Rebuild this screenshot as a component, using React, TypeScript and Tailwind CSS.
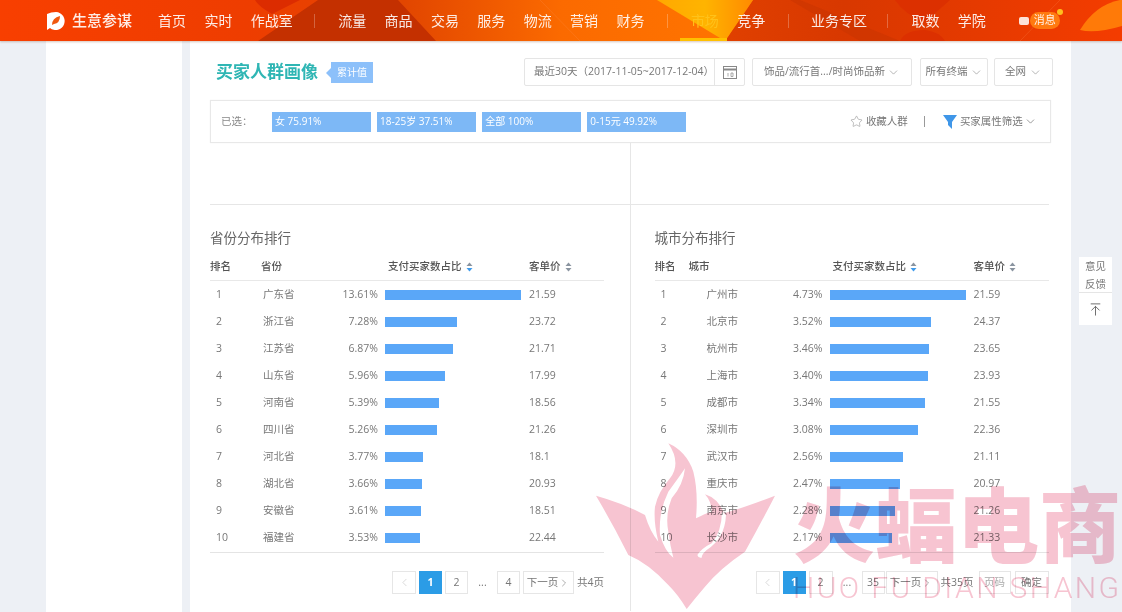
import { ArrowUpToLine, ChevronDown, ChevronLeft, ChevronRight, Star } from "lucide-react";

type Row = { name: string; pct: string; w: number; price: string };

const provinces: Row[] = [
  { name: "广东省", pct: "13.61%", w: 136, price: "21.59" },
  { name: "浙江省", pct: "7.28%", w: 72, price: "23.72" },
  { name: "江苏省", pct: "6.87%", w: 68, price: "21.71" },
  { name: "山东省", pct: "5.96%", w: 60, price: "17.99" },
  { name: "河南省", pct: "5.39%", w: 54, price: "18.56" },
  { name: "四川省", pct: "5.26%", w: 52, price: "21.26" },
  { name: "河北省", pct: "3.77%", w: 38, price: "18.1" },
  { name: "湖北省", pct: "3.66%", w: 37, price: "20.93" },
  { name: "安徽省", pct: "3.61%", w: 36, price: "18.51" },
  { name: "福建省", pct: "3.53%", w: 35, price: "22.44" },
];

const cities: Row[] = [
  { name: "广州市", pct: "4.73%", w: 136, price: "21.59" },
  { name: "北京市", pct: "3.52%", w: 101, price: "24.37" },
  { name: "杭州市", pct: "3.46%", w: 99, price: "23.65" },
  { name: "上海市", pct: "3.40%", w: 98, price: "23.93" },
  { name: "成都市", pct: "3.34%", w: 95, price: "21.55" },
  { name: "深圳市", pct: "3.08%", w: 88, price: "22.36" },
  { name: "武汉市", pct: "2.56%", w: 73, price: "21.11" },
  { name: "重庆市", pct: "2.47%", w: 70, price: "20.97" },
  { name: "南京市", pct: "2.28%", w: 65, price: "21.26" },
  { name: "长沙市", pct: "2.17%", w: 62, price: "21.33" },
];

const chips = ["女 75.91%", "18-25岁 37.51%", "全部 100%", "0-15元 49.92%"];

function Sort({ active }: { active?: boolean }) {
  return (
    <svg width="7" height="10" viewBox="0 0 7 10" className="ml-[4px] inline-block">
      <path d="M3.5 0.5L6.5 4H0.5Z" fill="#8a94a0" />
      <path d="M3.5 9.5L0.5 6H6.5Z" fill={active ? "#3f9bec" : "#8a94a0"} />
    </svg>
  );
}

function NavSep({ className }: { className: string }) {
  return <span className={`h-[14px] w-px bg-white/25 ${className}`} />;
}

function Table({ rows, first, second }: { rows: Row[]; first: string; second: boolean }) {
  return (
    <div className="w-[394px] text-[10.5px] text-[#777]">
      <h3 className="h-[18px] text-[13.5px] leading-[18px] text-[#666]">{first === "省份" ? "省份分布排行" : "城市分布排行"}</h3>
      <div
        className={
          second
            ? "mt-[7px] grid h-[27px] grid-cols-[34px_144px_141px_1fr] items-center border-b border-[#e8e8e8] font-medium text-[#555]"
            : "mt-[7px] grid h-[27px] grid-cols-[51px_127px_141px_1fr] items-center border-b border-[#e8e8e8] font-medium text-[#555]"
        }
      >
        <span>排名</span>
        <span>{first}</span>
        <span className="flex items-center">
          支付买家数占比
          <Sort active />
        </span>
        <span className="flex items-center">
          客单价
          <Sort />
        </span>
      </div>
      <div className="border-b border-[#e4e4e4] pb-px">
        {rows.map((r, i) => (
          <div
            key={r.name}
            className={
              second
                ? "grid h-[27px] grid-cols-[52px_61px_55px_151px_1fr] items-center"
                : "grid h-[27px] grid-cols-[53px_60px_55px_151px_1fr] items-center"
            }
          >
            <span className="pl-[6px]">{i + 1}</span>
            <span>{r.name}</span>
            <span className="text-right">{r.pct}</span>
            <span className="pl-[7px]">
              <span className="block h-[10px] bg-[#5aa7f8]" style={{ width: r.w }} />
            </span>
            <span>{r.price}</span>
          </div>
        ))}
      </div>
    </div>
  );
}

const pageBtn = "flex h-[23px] items-center justify-center border border-[#e6e6e6] bg-white text-[10.5px] text-[#777]";

export default function App() {
  return (
    <div className="h-[612px] w-[1122px] overflow-hidden bg-white">
      <div
        className="relative flex h-[612px] w-[1122px] flex-col overflow-hidden bg-[#edf0f5] blur-[0.7px]"
        style={{ fontFamily: '"Open Sans", "Noto Sans CJK SC", sans-serif' }}
      >
        {/* top bar */}
        <header className="relative flex h-[41px] shrink-0 items-center text-[14px] text-white/90 shadow-[0_1px_2px_rgba(120,60,30,0.3)]">
          <svg className="absolute inset-0" width="1122" height="41" viewBox="0 0 1122 41">
            <defs>
              <linearGradient id="hd" x1="0" x2="1" y1="0" y2="0">
                <stop offset="0" stopColor="#f83f00" />
                <stop offset="0.22" stopColor="#ee3d00" />
                <stop offset="0.36" stopColor="#e24600" />
                <stop offset="0.5" stopColor="#fb6a00" />
                <stop offset="0.65" stopColor="#ff7400" />
                <stop offset="1" stopColor="#ff7400" />
              </linearGradient>
              <linearGradient id="yl" x1="0" x2="1" y1="0" y2="0">
                <stop offset="0" stopColor="#ffa800" />
                <stop offset="0.5" stopColor="#ffb400" />
                <stop offset="1" stopColor="#ff8a00" />
              </linearGradient>
              <linearGradient id="rt" x1="0" x2="1" y1="0" y2="0">
                <stop offset="0" stopColor="#e04000" />
                <stop offset="0.3" stopColor="#d83800" />
                <stop offset="1" stopColor="#f43c00" />
              </linearGradient>
            </defs>
            <rect width="1122" height="41" fill="url(#hd)" />
            <path d="M258 41L318 0H398L436 41Z" fill="#c43000" />
            <path d="M255 0H300L272 14Q258 6 255 0Z" fill="#dc2c00" />
            <path d="M753 0H1122V41H725Z" fill="url(#rt)" />
            <path d="M657 0H753L725 41Z" fill="url(#yl)" />
            <path d="M800 0L900 41H860L790 0Z" fill="#c83400" opacity="0.5" />
            <path d="M900 41Q905 30 925 30Q940 32 945 41ZM895 0H950L925 22Q905 15 895 0Z" fill="#dc3000" />
            <path d="M1080 30Q1095 5 1120 0H1122V26Q1095 34 1080 30Z" fill="#ff7a08" />
            <path d="M1020 41L1060 0M540 0L580 41" stroke="#ff9a60" strokeWidth="0.5" opacity="0.4" />
            <rect x="680" y="38" width="47" height="3" fill="#ffc000" />
          </svg>
          <div className="relative flex items-center pl-[46px]">
            <svg width="20" height="20" viewBox="0 0 20 20" className="mr-[6px]">
              <path d="M1 3Q5 1 10 1A9 9 0 1 1 4 17L1 19Z" fill="#fff" />
              <path d="M6 14Q6 7 14 5Q14 12 8 13" fill="#f0580f" />
            </svg>
            <span className="w-[86px] text-[15px] font-medium">生意参谋</span>
            <nav className="flex items-center gap-[18.4px]">
              <span>首页</span>
              <span>实时</span>
              <span>作战室</span>
              <NavSep className="ml-[3px]" />
              <span className="ml-[4.6px]">流量</span>
              <span>商品</span>
              <span>交易</span>
              <span>服务</span>
              <span>物流</span>
              <span>营销</span>
              <span>财务</span>
              <NavSep className="ml-[4px]" />
              <span className="ml-[4.6px] text-[#ffc21a]">市场</span>
              <span>竞争</span>
              <NavSep className="ml-[4px]" />
              <span className="ml-[4px]">业务专区</span>
              <NavSep className="ml-[2px]" />
              <span className="ml-[4.6px]">取数</span>
              <span>学院</span>
            </nav>
            <div className="relative ml-[33px] flex items-center gap-[1px] text-[11px]">
              <span className="h-[8px] w-[10px] rounded-[2px] bg-white/85" />
              <span className="rounded-full bg-[#ff7a10] px-[4px]">消息</span>
              <span className="absolute right-[-3px] top-[-3px] h-[6px] w-[6px] rounded-full bg-[#ffc01e]" />
            </div>
          </div>
        </header>

        <div className="flex min-h-0 flex-1 pl-[46px]">
          <aside className="w-[136px] shrink-0 bg-white" />
          <main className="ml-[8px] w-[881px] shrink-0 bg-white pl-[20px]">
            {/* title row */}
            <div className="mt-[17px] flex h-[28px] items-center">
              <h2 className="ml-[6px] text-[17px] font-bold text-[#2fb6b4]">买家人群画像</h2>
              <span className="relative ml-[13px] flex h-[21px] w-[42px] items-center justify-center bg-[#8cc0fa] text-[10px] text-white">
                累计值
                <span className="absolute left-[-5px] top-[6px] h-0 w-0 border-y-[5px] border-r-[5px] border-y-transparent border-r-[#8cc0fa]" />
              </span>
              <div className="ml-[151px] flex h-[28px] w-[221px] items-center rounded-[2px] border border-[#e5e5e5] text-[10.5px] text-[#777]">
                <span className="w-[189px] whitespace-nowrap pl-[9px]">最近30天（2017-11-05~2017-12-04）</span>
                <span className="flex h-full flex-1 items-center justify-center border-l border-[#e5e5e5]">
                  <svg width="14" height="14" viewBox="0 0 14 14" fill="none" stroke="#888">
                    <rect x="0.5" y="1.5" width="13" height="12" />
                    <path d="M0.5 4.5H13.5" strokeWidth="2" />
                    <path d="M5 8V11.5M8 8H10V11.5H8Z" strokeWidth="0.7" />
                  </svg>
                </span>
              </div>
              <div className="ml-[7px] flex h-[28px] w-[160px] items-center justify-center gap-[2px] rounded-[2px] border border-[#e5e5e5] text-[10.5px] text-[#777]">
                饰品/流行首.../时尚饰品新
                <ChevronDown size={13} strokeWidth={1} />
              </div>
              <div className="ml-[8px] flex h-[28px] w-[68px] items-center justify-center gap-[2px] rounded-[2px] border border-[#e5e5e5] text-[10.5px] text-[#777]">
                所有终端
                <ChevronDown size={13} strokeWidth={1} />
              </div>
              <div className="ml-[6px] flex h-[28px] w-[59px] items-center justify-center gap-[3px] rounded-[2px] border border-[#e5e5e5] text-[10.5px] text-[#777]">
                全网
                <ChevronDown size={13} strokeWidth={1} />
              </div>
            </div>

            {/* selected chips */}
            <div className="mt-[14px] flex h-[43px] w-[841px] items-center border border-[#e8e8e8] shadow-[0_0_1px_rgba(0,0,0,0.08)] text-[10.5px] text-[#888]">
              <span className="w-[61px] pl-[10px]">已选：</span>
              <div className="flex gap-[6.5px]">
                {chips.map((c) => (
                  <span key={c} className="flex h-[20px] w-[98.6px] items-center bg-[#7db8f6] pl-[3px] text-[10px] text-white">
                    {c}
                  </span>
                ))}
              </div>
              <Star className="ml-[164px] text-[#888]" size={13} strokeWidth={1} />
              <span className="ml-[3px] w-[58px] text-[#777]">收藏人群</span>
              <span className="h-[11px] w-px bg-[#999]" />
              <svg width="14" height="15" viewBox="0 0 14 15" className="ml-[18px]">
                <path d="M0 1H14L9 8V15L5 11V8Z" fill="#3f96e8" />
              </svg>
              <span className="ml-[3px] whitespace-nowrap text-[#777]">买家属性筛选</span>
              <ChevronDown className="ml-[1px] text-[#666]" size={13} strokeWidth={1.2} />
            </div>

            {/* empty chart area */}
            <div className="h-[62px] w-[839px] border-b border-[#e6e6e6]">
              <div className="h-full w-[420.5px] border-r border-[#e6e6e6]" />
            </div>

            <div className="flex">
              <section className="h-[406px] w-[420.5px] shrink-0 border-r border-[#e6e6e6] pt-[24px]">
                <Table rows={provinces} first="省份" second={false} />
                <div className="mt-[18px] flex w-[394px] items-center pl-[182px] text-[10.5px] text-[#777]">
                  <span className={`${pageBtn} w-[24px] text-[#bbb]`}>
                    <ChevronLeft size={13} strokeWidth={1} />
                  </span>
                  <span className="ml-[3px] flex h-[23px] w-[23px] items-center justify-center bg-[#2b9ce6] font-bold text-white">1</span>
                  <span className={`${pageBtn} ml-[3px] w-[23px]`}>2</span>
                  <span className="w-[29px] text-center">...</span>
                  <span className={`${pageBtn} w-[23px]`}>4</span>
                  <span className={`${pageBtn} ml-[3px] w-[51px]`}>
                    下一页
                    <ChevronRight size={12} strokeWidth={1.2} />
                  </span>
                  <span className="ml-[3px] whitespace-nowrap">共4页</span>
                </div>
              </section>
              <section className="pl-[24px] pt-[24px]">
                <Table rows={cities} first="城市" second />
                <div className="mt-[18px] flex w-[394px] items-center pl-[101px] text-[10.5px] text-[#777]">
                  <span className={`${pageBtn} w-[24px] text-[#bbb]`}>
                    <ChevronLeft size={13} strokeWidth={1} />
                  </span>
                  <span className="ml-[3px] flex h-[23px] w-[23px] items-center justify-center bg-[#2b9ce6] font-bold text-white">1</span>
                  <span className={`${pageBtn} ml-[3px] w-[24px]`}>2</span>
                  <span className="w-[29px] text-center">...</span>
                  <span className={`${pageBtn} w-[23px]`}>35</span>
                  <span className={`${pageBtn} ml-px w-[52px]`}>
                    下一页
                    <ChevronRight size={12} strokeWidth={1.2} />
                  </span>
                  <span className="ml-[3px] whitespace-nowrap">共35页</span>
                  <span className={`${pageBtn} ml-[5px] w-[32px] text-[#aaa]`}>页码</span>
                  <span className={`${pageBtn} ml-[4px] w-[34px]`}>确定</span>
                </div>
              </section>
            </div>
          </main>
        </div>

        {/* feedback widget */}
        <div className="absolute left-[1079px] top-[257px] w-[33px] bg-white text-center text-[10.5px] leading-[18px] text-[#777]">
          <div className="h-[36px] border-b border-[#e5e5e5]">
            意见
            <br />
            反馈
          </div>
          <div className="flex h-[32px] items-center justify-center text-[#666]">
            <ArrowUpToLine size={15} strokeWidth={1.5} />
          </div>
        </div>

        {/* watermark */}
        <svg className="absolute left-[590px] top-[435px] mix-blend-multiply" width="200" height="177" viewBox="0 0 600 531">
          <path
            fillRule="evenodd"
            fill="#f7c4d1"
            d="M18 182Q100 205 165 240Q180 290 205 320Q190 260 195 215Q205 170 240 130Q275 85 235 25Q290 50 310 110Q325 170 318 250Q345 235 365 230Q365 200 345 178Q385 190 402 235Q470 215 555 182Q510 270 465 350Q390 400 345 455Q315 490 290 522Q265 480 235 450Q175 385 115 360Q70 270 18 182ZM285 100Q280 150 245 190Q225 240 235 290Q240 330 250 368Q225 350 210 300Q205 230 235 170Q265 130 285 100ZM408 240Q405 310 350 345Q335 358 335 368Q325 370 322 360Q335 340 365 325Q395 290 396 230Z"
          />
        </svg>
        <div className="absolute left-[793px] top-[476px] whitespace-nowrap text-[82px] font-black leading-[96px] text-[#f7c4d1] mix-blend-multiply">
          火蝠电商
        </div>
        <div
          className="absolute left-[793px] top-[572px] whitespace-nowrap text-[30px] font-light leading-[32px] tracking-[2.4px] text-[#f7c4d1] mix-blend-multiply"
          style={{ fontFamily: "Roboto, sans-serif" }}
        >
          HUO FU DIAN SHANG
        </div>
      </div>
    </div>
  );
}
